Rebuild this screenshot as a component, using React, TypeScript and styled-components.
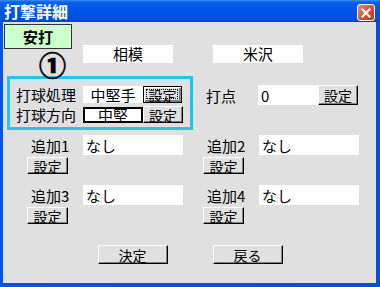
import styled, { createGlobalStyle } from 'styled-components';

const GlobalStyle = createGlobalStyle`
  html, body { margin: 0; padding: 0; }
  body {
    font-family: "Noto Sans CJK JP", "Noto Sans", sans-serif;
    font-size: 15px;
    color: #000;
  }
`;

const Window = styled.div`
  width: 380px;
  height: 287px;
  display: flex;
  flex-direction: column;
  background: linear-gradient(to right, #0a4fd8, #0058ee 2px, #0050e0);
  overflow: hidden;
`;

const TitleBar = styled.div`
  height: 22px;
  flex: none;
  display: flex;
  justify-content: space-between;
  align-items: flex-start;
  padding: 0 5px 0 4px;
  background: linear-gradient(to bottom, #3d8cf5 0%, #0a60eb 10%, #0055e5 45%, #0052e0 80%, #0046cc 100%);
`;

const Title = styled.span`
  color: #fff;
  font-weight: bold;
  font-size: 16px;
  line-height: 22px;
`;

const CloseBtn = styled.div`
  width: 18px;
  height: 17px;
  margin-top: 4px;
  box-sizing: border-box;
  border: 1px solid #fff;
  border-radius: 3px;
  background: linear-gradient(135deg, #f08a64, #d94a25 60%, #c13a18);
  display: flex;
  align-items: center;
  justify-content: center;
`;

const Body = styled.div`
  flex: 1;
  margin: 0 4px 4px 3px;
  padding: 2px 0 0 1px;
  background: #e0e0e0;
  display: flex;
  flex-direction: column;
`;

const TopRow = styled.div`
  display: grid;
  grid-template-columns: 79px 90px 40px 90px;
  height: 39px;
`;

const Badge = styled.div`
  width: 68px;
  height: 25px;
  box-sizing: border-box;
  border: 1px solid #333;
  background: #ccffcc;
  display: flex;
  align-items: center;
  justify-content: center;
  font-size: 15px;
  font-weight: bold;
`;

const NameBox = styled.div<{ $col: number }>`
  grid-column: ${p => p.$col};
  align-self: end;
  height: 18px;
  background: #fff;
  display: flex;
  align-items: center;
  justify-content: center;
  font-size: 15px;
  line-height: 18px;
`;

const MidRow = styled.div`
  display: flex;
  align-items: flex-start;
  margin-top: 13px;
`;

const Group = styled.div`
  position: relative;
  margin-left: 3px;
  width: 186px;
  height: 54px;
  box-sizing: border-box;
  border: 3px solid #1cc8f2;
  padding: 7px 0 0 6px;
  display: grid;
  grid-template-columns: 67px 60px 39px;
  grid-auto-rows: 17px;
  row-gap: 3px;
  align-items: center;
`;

const Marker = styled.span`
  position: absolute;
  left: 29px;
  top: -25px;
  display: block;
  height: 22px;
  font-size: 27px;
  line-height: 22px;
  font-weight: 900;
  -webkit-text-stroke: 0.6px #000;
`;

const Label = styled.span`
  font-size: 15px;
  line-height: 17px;
  white-space: nowrap;
`;

const ValueBox = styled.div<{ $bordered?: boolean }>`
  height: ${p => (p.$bordered ? '16px' : '17px')};
  box-sizing: border-box;
  background: #fff;
  border: ${p => (p.$bordered ? '2px solid #000' : 'none')};
  display: flex;
  align-items: center;
  justify-content: center;
  font-size: 15px;
`;

const Button = styled.button<{ $w: number; $h: number; $focus?: boolean }>`
  position: relative;
  width: ${p => p.$w}px;
  height: ${p => p.$h}px;
  padding: 0;
  box-sizing: border-box;
  background: #e0e0e0;
  border: 1px solid;
  border-color: ${p => (p.$focus ? '#000' : '#fff #000 #000 #fff')};
  box-shadow: ${p =>
    p.$focus ? 'inset 1px 1px #fff, inset -2px -2px #808080' : 'inset -1px -1px #808080'};
  font-family: inherit;
  font-size: 14px;
  line-height: 1;
  color: #000;
  display: flex;
  align-items: center;
  justify-content: center;
  &::after {
    content: '';
    display: ${p => (p.$focus ? 'block' : 'none')};
    position: absolute;
    inset: 2px 3px 3px 2px;
    border: 1px dotted #000;
  }
`;

const PointRow = styled.div`
  margin: 9px 0 0 13px;
  display: grid;
  grid-template-columns: 52px 60px 40px;
  height: 20px;
  align-items: center;
`;

const TextField = styled.div`
  height: 20px;
  background: #fff;
  padding-left: 3px;
  display: flex;
  align-items: center;
  font-size: 15px;
`;

const Extras = styled.div`
  display: grid;
  grid-template-columns: 156px 155px;
  column-gap: 20px;
  row-gap: 11px;
  margin: 5px 0 0 23px;
`;

const Cell = styled.div`
  display: flex;
  flex-direction: column;
  align-items: flex-start;
  gap: 2px;
`;

const CellLine = styled.div`
  display: grid;
  grid-template-columns: 52px 100px;
  margin-left: 4px;
  height: 20px;
  align-items: center;
`;

const Footer = styled.div`
  margin-top: 21px;
  display: flex;
  justify-content: center;
  gap: 45px;
`;

const extras = ['追加1', '追加2', '追加3', '追加4'];

export default function App() {
  return (
    <>
      <GlobalStyle />
      <Window>
        <TitleBar>
          <Title>打撃詳細</Title>
          <CloseBtn>
            <svg width="10" height="10" viewBox="0 0 10 10">
              <path d="M1.5 1.5 L8.5 8.5 M8.5 1.5 L1.5 8.5" stroke="#fff" strokeWidth="2.2" strokeLinecap="square" />
            </svg>
          </CloseBtn>
        </TitleBar>
        <Body>
          <TopRow>
            <Badge>安打</Badge>
            <NameBox $col={2}>相模</NameBox>
            <NameBox $col={4}>米沢</NameBox>
          </TopRow>
          <MidRow>
            <Group>
              <Marker>①</Marker>
              <Label>打球処理</Label>
              <ValueBox>中堅手</ValueBox>
              <Button $w={39} $h={17} $focus>設定</Button>
              <Label>打球方向</Label>
              <ValueBox $bordered>中堅</ValueBox>
              <Button $w={40} $h={17}>設定</Button>
            </Group>
            <PointRow>
              <Label>打点</Label>
              <TextField>0</TextField>
              <Button $w={40} $h={20}>設定</Button>
            </PointRow>
          </MidRow>
          <Extras>
            {extras.map(name => (
              <Cell key={name}>
                <CellLine>
                  <Label>{name}</Label>
                  <TextField>なし</TextField>
                </CellLine>
                <Button $w={41} $h={17}>設定</Button>
              </Cell>
            ))}
          </Extras>
          <Footer>
            <Button $w={70} $h={19}>決定</Button>
            <Button $w={70} $h={19}>戻る</Button>
          </Footer>
        </Body>
      </Window>
    </>
  );
}
